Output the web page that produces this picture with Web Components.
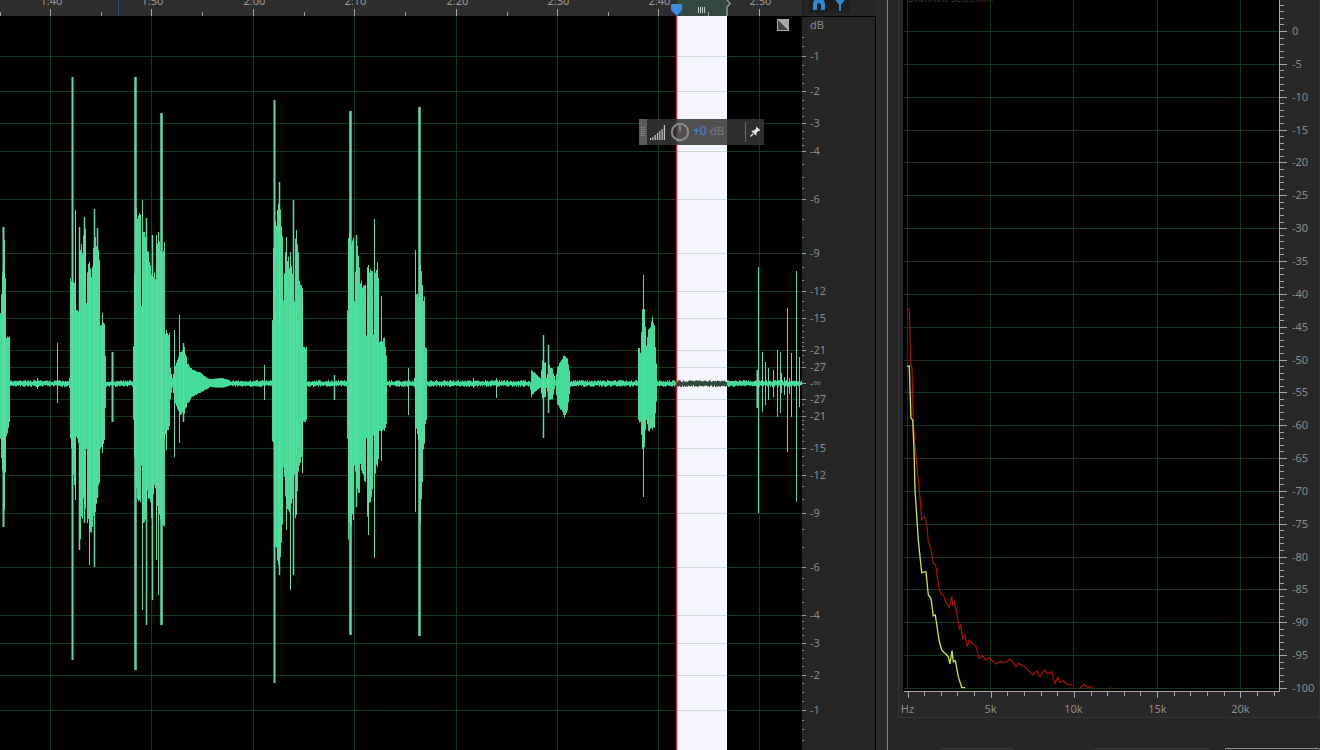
<!DOCTYPE html>
<html>
<head>
<meta charset="utf-8">
<title>Audio editor</title>
<style>
    html, body{ margin: 0; height: 100%; overflow: hidden; background: #262626; }
</style>
</head>
<body>
<audio-editor>
    <time-ruler slot="ruler"></time-ruler>
    <tool-buttons slot="tools"></tool-buttons>
    <wave-view slot="wave"><gain-hud></gain-hud></wave-view>
    <db-ruler slot="scale"></db-ruler>
    <spectrum-panel slot="spectrum"></spectrum-panel>
</audio-editor>

<script>
const FONT = '"Noto Sans", "Open Sans", sans-serif';
const MAJORS = [50.5, 151.5, 253.5, 354.5, 456.5, 557.5, 658.5, 759.5];
const DB_LABELS = [1, 2, 3, 4, 6, 9, 12, 15, 21, 27];
const CENTER = 383;
const FULL = 367;

// dB value to y in the waveform, upper or lower half
const dbY = (db, dir) => CENTER - dir * FULL * Math.pow(10, -db / 20);

function seeded(seed){
    let s = seed;
    return () => {
        s = (s * 16807) % 2147483647;
        return s / 2147483647;
    };
}

class AudioEditor extends HTMLElement{
    constructor(){
        super();
        this.attachShadow({ mode: 'open' });
    }

    connectedCallback(){
        this.shadowRoot.innerHTML = `
            <style>
                :host{ display: flex; width: 1320px; height: 750px; background: #262626; font-family: ${FONT}; }
                .editor{ width: 876px; flex: none; display: flex; flex-direction: column; }
                .top, .bottom{ display: flex; }
                .top{ height: 16px; }
                .bottom{ height: 734px; }
                .strip{ width: 11px; flex: none; background: #2a2a2a; }
                .blue{ width: 1px; flex: none; background: #3f8fe0; }
            </style>
            <div class="editor">
                <div class="top"><slot name="ruler"></slot><slot name="tools"></slot></div>
                <div class="bottom"><slot name="wave"></slot><slot name="scale"></slot></div>
            </div>
            <div class="strip"></div>
            <div class="blue"></div>
            <slot name="spectrum"></slot>
        `;
    }
}

class TimeRuler extends HTMLElement{
    constructor(){
        super();
        this.attachShadow({ mode: 'open' });
    }

    connectedCallback(){
        const labels = ["1:40", "1:50", "2:00", "2:10", "2:20", "2:30", "2:40", "2:50"];
        const minors = [0.5, 101.5, 202.5, 304.5, 405.5, 507.5, 608.5, 708.5];
        let marks = "";
        MAJORS.forEach((x, i) => {
            marks += `<path d="M${x} 9V16" stroke="#a8a8a8"/>`;
            marks += `<text x="${x + 1}" y="5">${labels[i]}</text>`;
        });
        minors.forEach(x => { marks += `<path d="M${x} 12V16" stroke="#a0a0a0"/>`; });
        this.shadowRoot.innerHTML = `
            <style>
                :host{ display: block; width: 802px; height: 16px; background: #2d2d2d; }
                svg{ display: block; }
                text{ font: 11px ${FONT}; fill: #9c9c9c; text-anchor: middle; }
            </style>
            <svg width="802" height="16" viewBox="0 0 802 16">
                <rect x="677" y="0" width="50" height="16" fill="#33493f"/>
                ${marks}
                <path d="M118.5 0V16" stroke="#2c4a72"/>
                <path d="M698.5 7V13M700.5 7V13M702.5 7V13M704.5 7V13" stroke="#c4cfc9"/>
                <path d="M727 0L730 3.5 727 7V16" fill="none" stroke="#8d9a94" stroke-width="1.5"/>
                <path d="M671 5Q671 4 672 4H681Q682 4 682 5V10L677 16 671 10Z" fill="#3b8ee2"/>
            </svg>
        `;
    }
}

class ToolButtons extends HTMLElement{
    constructor(){
        super();
        this.attachShadow({ mode: 'open' });
    }

    connectedCallback(){
        this.shadowRoot.innerHTML = `
            <style>
                :host{ display: flex; gap: 1px; width: 74px; height: 16px; box-sizing: border-box; padding-left: 6px; background: #262626; border-left: 1px solid #1a1a1a; }
                .btn{ width: 20px; height: 13px; background: #1e1e1e; border-radius: 0 0 3px 3px; display: flex; justify-content: center; }
                svg{ display: block; }
            </style>
            <div class="btn">
                <svg width="14" height="12" viewBox="0 0 14 12"><path d="M1 10V4a6 6 0 0 1 12 0V10H9V5a2 2 0 0 0-4 0V10Z" fill="#2f86d2"/></svg>
            </div>
            <div class="btn">
                <svg width="12" height="12" viewBox="0 0 12 12"><path d="M6 11V3" stroke="#2f86d2" stroke-width="2"/><path d="M1.5 0H10.5L8 4H4Z" fill="#2f86d2"/></svg>
            </div>
        `;
    }
}

class WaveView extends HTMLElement{
    constructor(){
        super();
        this.attachShadow({ mode: 'open' });
    }

    connectedCallback(){
        this.render();
    }

    // x, top, bottom key points of the solid part of each burst
    get cores(){
        return [
            [[0,310,443],[2,270,478],[5,270,478],[6,333,440],[9,335,425],[10,376,391]],
            [[69,378,388],[70,277,440],[74,277,487],[75,310,440],[78,310,445],[79,240,550],[82,245,520],[83,225,500],[85,225,523],[86,300,450],[87,262,530],[92,265,540],[93,235,530],[97,232,500],[99,250,490],[100,320,455],[104,323,445],[105,355,410],[106,379,387]],
            [[133,345,420],[135,200,500],[140,210,505],[141,300,470],[142,225,540],[146,235,530],[147,245,500],[151,265,520],[155,270,490],[156,330,440],[157,240,510],[164,240,540],[165,330,435],[169,330,430],[170,367,400],[172,378,388]],
            [[172,378,388],[175,365,405],[180,350,415],[184,345,415],[187,362,405],[192,369,398],[200,372,393],[206,377,390],[210,379,387],[216,378,388],[222,378,388],[230,380,386]],
            [[272,317,443],[273,240,450],[275,215,560],[279,200,570],[282,225,540],[283,297,470],[285,245,500],[289,255,520],[292,265,510],[293,225,560],[294,300,480],[295,235,530],[298,245,480],[299,280,470],[302,285,455],[303,343,423],[306,345,423],[307,375,392]],
            [[347,310,443],[348,230,540],[353,235,520],[354,297,470],[356,240,490],[359,255,505],[360,280,470],[365,280,490],[366,330,440],[367,265,520],[372,260,500],[373,330,440],[374,260,480],[378,270,465],[379,340,435],[384,335,433],[386,355,425],[387,378,388]],
            [[414,378,388],[415,293,430],[418,293,440],[419,250,560],[421,270,500],[422,293,460],[424,293,445],[425,347,425],[426,347,420],[427,375,392]],
            [[530,382,390],[531,370,397],[534,372,393],[540,378,388],[542,360,400],[545,362,398],[546,378,388],[549,365,400],[552,368,400],[555,380,386],[557,367,405],[561,358,412],[564,353,418],[567,358,412],[569,370,395],[570,380,386]],
            [[638,345,422],[640,350,425],[642,308,450],[644,308,450],[646,345,420],[648,329,432],[650,325,432],[652,311,430],[654,325,430],[655,347,415],[657,375,392]]
        ];
    }

    // x, top, bottom, width of the thin peaks
    get spikes(){
        return [
            [3.5,227,527,2],[4.5,240,510,1],[37.5,378,389,1],[57.5,343,403,1],
            [72.5,77,660,2],[75.5,210,500,1],[79.5,227,550,1.5],[84.5,217,523,1.5],[89.5,262,565,1],[94.5,209,567,1.5],[97.5,228,498,1.5],[102.5,313,453,1],
            [112.5,352,422,2],
            [135.5,77,670,2.5],[142.5,200,610,1],[146.5,218,625,1.5],[152.5,235,600,1.5],[156.5,235,560,1],[158.5,232,595,1],[161.5,113,625,2.5],[166.5,330,450,1],
            [174.5,330,457,1],[179.5,315,443,1],[183.5,343,422,1.5],[264.5,365,400,1],
            [274.5,100,683,2],[279.5,182,575,1.5],[286.5,237,530,1],[290.5,252,590,1],[293.5,200,575,1.5],[296.5,230,515,1],[302.5,288,473,1],
            [334.5,375,400,1.5],
            [350.5,111,635,2.5],[353.5,297,520,1],[356.5,235,507,1.5],[368.5,265,535,1],[374.5,219,558,1],[377.5,262,467,1],[381.5,296,461,1],
            [408.5,368,415,1],[415.5,250,512,1],[419.5,107,636,2.5],[422.5,285,482,1],
            [473.5,378,388,1],[496.5,378,398,1],[543.5,335,438,1.5],[548.5,345,413,1.5],
            [643.5,275,497,1],
            [757.5,370,408,2],[758.5,267,513,1],[762.5,352,412,1],[765.5,362,405,1],[768.5,368,400,1],[773.5,370,397,1],[777.5,350,417,1],[780.5,352,413,1],[781.5,373,393,1],[784.5,377,395,1],[787.5,308,452,1],[789.5,378,394,1],[791.5,353,417,1],[796.5,271,502,1],[799.5,357,407,1]
        ];
    }

    columns(){
        const rnd = seeded(4711);
        const cols = [];
        for(let x = 0; x < 802; x++){
            const t = 1.5 + rnd() * 2;
            const b = 1.5 + rnd() * 2;
            cols.push([CENTER + 0.5 - t, CENTER + 0.5 + b]);
        }
        this.cores.forEach(points => {
            for(let i = 0; i < points.length - 1; i++){
                const [x0, t0, b0] = points[i];
                const [x1, t1, b1] = points[i + 1];
                for(let x = x0; x < x1; x++){
                    const k = (x - x0) / (x1 - x0);
                    const span = (b0 - t0) * 0.05;
                    cols[x] = [
                        t0 + (t1 - t0) * k + rnd() * span,
                        b0 + (b1 - b0) * k - rnd() * span
                    ];
                }
            }
        });
        return cols;
    }

    render(){
        const cols = this.columns();
        let live = "", selected = "";
        cols.forEach((c, x) => {
            const d = `M${x + 0.5} ${c[0].toFixed(1)}V${c[1].toFixed(1)}`;
            if(x >= 677 && x < 727) selected += d;
            else live += d;
        });
        const spikes = this.spikes.map(s =>
            `<path d="M${s[0]} ${s[1]}V${s[2]}" stroke-width="${s[3]}"/>`).join("");

        let rows = `<rect x="0" y="${CENTER}" width="802" height="1" fill="#16361c"/>`;
        let selRows = "";
        DB_LABELS.forEach(db => {
            [1, -1].forEach(dir => {
                const y = Math.round(dbY(db, dir)) + 0.5;
                rows += `<path d="M0 ${y}H802"/>`;
                selRows += `<path d="M677 ${y}H727"/>`;
            });
        });
        const cols2 = MAJORS.map(x => `<path d="M${x} 16V750"/>`).join("");

        this.shadowRoot.innerHTML = `
            <style>
                :host{ display: block; position: relative; width: 802px; height: 734px; background: #000; overflow: hidden; }
                svg{ display: block; }
                .corner{ position: absolute; left: 777px; top: 3px; }
            </style>
            <svg width="802" height="734" viewBox="0 16 802 734">
                <g stroke="#16361c" fill="#16361c">${rows}${cols2}</g>
                <path d="${live}" stroke="#43dc98" fill="none"/>
                <g stroke="#5edaa3" fill="none">${spikes}</g>
                <rect x="677" y="16" width="50" height="734" fill="#f5f5ff"/>
                <g stroke="#cddbd0">${selRows}</g>
                <path d="${selected}" stroke="#2f4a40" fill="none"/>
                <path d="M676.5 16V750" stroke="#cc2230" stroke-width="1.5"/>
            </svg>
            <svg class="corner" width="12" height="12" viewBox="0 0 12 12">
                <rect width="12" height="12" fill="#a8a8a8"/>
                <path d="M1 1L11 11H1Z" fill="#454545"/>
            </svg>
            <slot></slot>
        `;
    }
}

class GainHud extends HTMLElement{
    constructor(){
        super();
        this.attachShadow({ mode: 'open' });
    }

    connectedCallback(){
        const bars = [2, 3, 5, 7, 9, 11, 15].map((h, i) =>
            `<rect x="${i * 2.3}" y="${15 - h}" width="1.2" height="${h}" fill="#c4c4c4"/>`).join("");
        this.shadowRoot.innerHTML = `
            <style>
                :host{ position: absolute; left: 639px; top: 103px; width: 125px; height: 26px; display: flex; align-items: center; background: rgba(54, 54, 54, .86); font: 11.5px ${FONT}; }
                svg{ display: block; }
                .grip{ width: 8px; height: 26px; background: #5c5c5c; display: flex; justify-content: center; align-items: center; }
                .meter{ margin-left: 3px; }
                .knob{ margin-left: 4px; }
                .plus{ margin-left: 3px; color: #3f8ade; font-size: 12px; padding-bottom: 3px; }
                .unit{ margin-left: 3px; color: #7b7b7b; padding-bottom: 3px; }
                .line{ margin-left: auto; width: 1px; height: 20px; background: #6a6a6a; }
                .pin{ margin: 0 3px 1px 4px; }
            </style>
            <div class="grip">
                <svg width="4" height="10" viewBox="0 0 4 10">
                    <path d="M0.5 0V10M3 0V10" stroke="#a6a6a6" stroke-dasharray="1 1"/>
                </svg>
            </div>
            <svg class="meter" width="16" height="15" viewBox="0 0 16 15">${bars}</svg>
            <svg class="knob" width="20" height="20" viewBox="0 0 20 20">
                <circle cx="10" cy="10" r="8.2" fill="none" stroke="#8d8d8d" stroke-width="2"/>
                <path d="M10 2V10" stroke="#8d8d8d" stroke-width="1.5"/>
            </svg>
            <span class="plus">+0</span>
            <span class="unit">dB</span>
            <div class="line"></div>
            <svg class="pin" width="11" height="11" viewBox="0 0 11 11">
                <path d="M6.5 0.5L10.5 4.5 9.3 5 8 5 6.3 7.6 6.6 9 5.8 9.4 1.6 5.2 2 4.4 3.4 4.7 6 3 6 1.7Z" fill="#e4e4e4"/>
                <path d="M3.2 7.8L0.5 10.5" stroke="#e4e4e4" stroke-width="1.3"/>
            </svg>
        `;
    }
}

class DbRuler extends HTMLElement{
    constructor(){
        super();
        this.attachShadow({ mode: 'open' });
    }

    connectedCallback(){
        const minor = [];
        for(let d = 0.25; d < 4; d += 0.25) if(d % 1) minor.push(d);
        minor.push(4.5, 5, 5.5, 7, 8, 10, 11, 13, 14, 16, 17, 18, 19, 20, 22.5, 25);
        let marks = "";
        minor.forEach(db => {
            [1, -1].forEach(dir => {
                const y = Math.round(dbY(db, dir)) + 0.5;
                if(y > 30) marks += `<path d="M802 ${y}H804" stroke="#8a8a8a"/>`;
            });
        });
        DB_LABELS.forEach(db => {
            [1, -1].forEach(dir => {
                const y = Math.round(dbY(db, dir));
                marks += `<path d="M802 ${y + 0.5}H806" stroke="#9a9a9a"/>`;
                marks += `<text x="810" y="${y + 4}">-${db}</text>`;
            });
        });
        this.shadowRoot.innerHTML = `
            <style>
                :host{ display: block; width: 74px; height: 734px; box-sizing: border-box; background: #262626; border-top: 1px solid #000; border-right: 1px solid #000; }
                svg{ display: block; }
                text{ font: 11px ${FONT}; fill: #8c8c8c; }
            </style>
            <svg width="73" height="733" viewBox="802 17 73 733">
                <text x="810" y="29">dB</text>
                ${marks}
                <path d="M802 383.5H806" stroke="#9a9a9a"/>
                <text x="810" y="387">-∞</text>
            </svg>
        `;
    }
}

class SpectrumPanel extends HTMLElement{
    constructor(){
        super();
        this.attachShadow({ mode: 'open' });
    }

    get red(){
        return [
            [[907.3,309],[909.3,309.3],[910.7,363],[912,368],[913.3,423],[916.7,463],[919.3,490],[921,510],[921.7,519.3],[924.3,516.7],[926.7,523.3],[928.3,541.7],[931,548.3],[933.3,563.3],[935.7,565],[939.3,590],[941.7,595],[943.3,595],[945.7,601.7],[949.3,607.3],[951.7,596],[952.7,605],[954.3,601.7],[956.7,613.3],[959.3,628.3],[960.7,625],[962.7,638.3],[965,635],[967.3,646.7],[969.3,640],[976,646.7],[979,658.3],[982.7,655.7],[985.7,660],[989.3,657.7],[996,664],[1000,661.7],[1005,662.3],[1010.7,659.3],[1016,666.7],[1018.3,663.3],[1025,666.7],[1032.7,675],[1036.7,671],[1040,676.7],[1044.3,670],[1047.7,674],[1051.7,671.7],[1055,683.3],[1057.7,677.7],[1060,682.3],[1063.3,680.7],[1066.7,684],[1073.3,685]],
            [[1079.3,689],[1084,684.3],[1088.3,687.7],[1093.3,686.7]],
            [[1109.3,689.3],[1110.7,687.3]]
        ];
    }

    get yellow(){
        return [[907.3,366.7],[909.3,366],[910,390],[911,418.3],[912.7,420],[914,450],[915,490],[918.3,540],[921.7,572.7],[926,571.7],[928.3,595],[931,598.3],[933.3,616],[935.3,615],[939,640],[941.7,650],[948.3,656.7],[950,664],[952,650.7],[953.3,661.7],[955.3,660.7],[958.3,676.7],[961.7,687.3],[965,687.7]];
    }

    connectedCallback(){
        const rowY = i => 31 + i * 32.85;
        const vx = [907.5, 990.5, 1073.5, 1157.5, 1240.5];
        const names = ["Hz", "5k", "10k", "15k", "20k"];
        let grid = "", axis = "";
        for(let i = 0; i <= 20; i++){
            const y = Math.round(rowY(i)) + 0.5;
            grid += `<path d="M904 ${y}H1279"/>`;
            axis += `<path d="M1279 ${y}H1287" stroke="#a8a8a8"/>`;
            axis += `<text x="1292" y="${y + 3.5}">${i ? "-" + i * 5 : "0"}</text>`;
        }
        for(let i = -5; i < 100; i++){
            if(i % 5 === 0) continue;
            const y = Math.round(31 + i * 6.57) + 0.5;
            axis += `<path d="M1279 ${y}H1284" stroke="#a0a0a0"/>`;
        }
        vx.forEach((x, i) => {
            grid += `<path d="M${x} 0V690"/>`;
            axis += `<text x="${x}" y="713" text-anchor="middle">${names[i]}</text>`;
        });
        for(let k = 0; k <= 22; k++){
            const x = Math.round(907.5 + k * 16.64) + 0.5;
            axis += `<path d="M${x} 691V${k % 5 ? 696 : 698}" stroke="#a8a8a8"/>`;
        }
        const line = pts => "M" + pts.map(p => p.join(" ")).join("L");

        this.shadowRoot.innerHTML = `
            <style>
                :host{ display: flex; flex-direction: column; flex: 1; min-width: 0; }
                svg{ display: block; }
                .frame{ margin-left: 10px; height: 718px; box-sizing: border-box; background: #282828; border: 1px solid #343434; border-top: 0; }
                text{ font: 11px ${FONT}; fill: #8c8c8c; }
                .faint{ font-size: 10px; fill: #333; }
                .row{ display: flex; margin-top: 30px; padding-left: 52px; }
                .row div{ height: 2px; box-sizing: border-box; border: 1px solid #3a3a3a; border-bottom: 0; border-radius: 2px 2px 0 0; }
                .a{ width: 73px; }
                .b{ width: 116px; margin-left: 80px; }
                .c{ flex: 1; margin-left: 16px; border-color: #8a8a8a !important; }
            </style>
            <div class="frame">
                <svg width="420" height="717" viewBox="899 0 420 717">
                    <rect x="903" y="0" width="376" height="691" fill="#000"/>
                    <text class="faint" x="908" y="2">Scanned Selection</text>
                    <g stroke="#16361c">${grid}</g>
                    <path d="M904 691.5H1279.5V0" fill="none" stroke="#a8a8a8"/>
                    ${axis}
                    <g fill="none" stroke="#a91212" stroke-width="1.2">${this.red.map(p => `<path d="${line(p)}"/>`).join("")}</g>
                    <path d="${line(this.yellow)}" fill="none" stroke="#cbe83c" stroke-width="1.3"/>
                </svg>
            </div>
            <div class="row"><div class="a"></div><div class="b"></div><div class="c"></div></div>
        `;
    }
}

customElements.define('audio-editor', AudioEditor);
customElements.define('time-ruler', TimeRuler);
customElements.define('tool-buttons', ToolButtons);
customElements.define('wave-view', WaveView);
customElements.define('gain-hud', GainHud);
customElements.define('db-ruler', DbRuler);
customElements.define('spectrum-panel', SpectrumPanel);
</script>
</body>
</html>
